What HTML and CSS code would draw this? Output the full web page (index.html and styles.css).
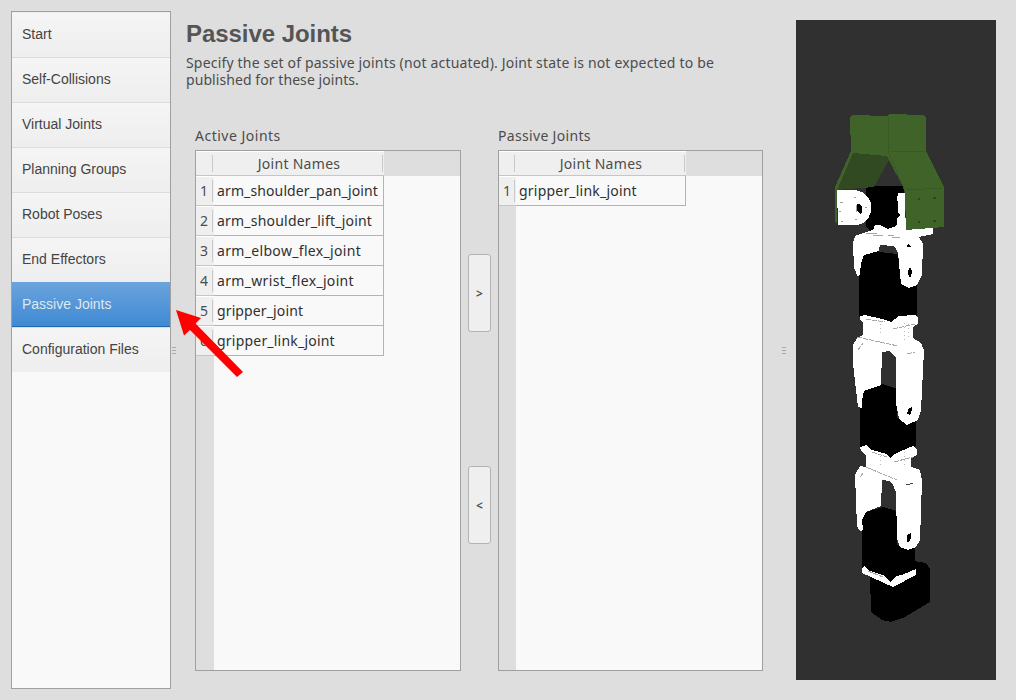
FILE: index.html
```html
<!DOCTYPE html>
<html lang="en">
<head>
<meta charset="utf-8">
<title>Passive Joints</title>
<link rel="stylesheet" href="styles.css">
</head>
<body>
<div class="app">
  <nav class="sidebar">
    <div class="item"><span>Start</span></div>
    <div class="item"><span>Self-Collisions</span></div>
    <div class="item"><span>Virtual Joints</span></div>
    <div class="item"><span>Planning Groups</span></div>
    <div class="item"><span>Robot Poses</span></div>
    <div class="item"><span>End Effectors</span></div>
    <div class="item selected"><span>Passive Joints</span></div>
    <div class="item"><span>Configuration Files</span></div>
  </nav>
  <div class="grip"><i></i><i></i><i></i></div>
  <main class="content">
    <h1>Passive Joints</h1>
    <p class="intro"><span class="intro-first">Specify the set of passive joints (not actuated). Joint state is not expected to be</span><br><span class="intro-second">published for these joints.</span></p>
    <div class="lists">
      <section class="list">
        <h2 class="wide">Active Joints</h2>
        <div class="table active">
          <div class="thead"><div class="corner"></div><div class="colhead"><span>Joint Names</span></div></div>
          <div class="row"><div class="num">1</div><div class="cell"><span class="snug">arm_shoulder_pan_joint</span></div></div>
          <div class="row"><div class="num">2</div><div class="cell"><span>arm_shoulder_lift_joint</span></div></div>
          <div class="row"><div class="num">3</div><div class="cell"><span class="loose">arm_elbow_flex_joint</span></div></div>
          <div class="row"><div class="num">4</div><div class="cell"><span class="loose">arm_wrist_flex_joint</span></div></div>
          <div class="row"><div class="num">5</div><div class="cell"><span class="snug">gripper_joint</span></div></div>
          <div class="row"><div class="num">6</div><div class="cell"><span>gripper_link_joint</span></div></div>
          <div class="gutter"></div>
        </div>
      </section>
      <div class="buttons"><button>&gt;</button><button>&lt;</button></div>
      <section class="list second">
        <h2>Passive Joints</h2>
        <div class="table passive">
          <div class="thead"><div class="corner"></div><div class="colhead"><span>Joint Names</span></div></div>
          <div class="row"><div class="num">1</div><div class="cell"><span>gripper_link_joint</span></div></div>
          <div class="gutter"></div>
        </div>
      </section>
    </div>
  </main>
  <div class="grip right"><i></i><i></i><i></i></div>
  <svg class="scene" viewBox="796 20 200 660" width="200" height="660" shape-rendering="crispEdges">
    <rect x="796" y="20" width="200" height="660" fill="#303030"/>
    <!-- base -->
    <path fill="#000" d="M870 575L914 561L926 563L930 569V602L905 617L891 622L882 620L871 612Z"/>
    <!-- servo bodies -->
    <path fill="#000" d="M862 520L866 512L883 507L897 511V545H915V572L892 581L862 572Z"/>
    <path fill="#000" d="M860 400L865 390L882 384L897 389L897 418H916V446L905 453L890 458L860 447Z"/>
    <path fill="#000" d="M859 270L863 255L878 251L898 254L901 283H917V316L905 318L890 322L859 317Z"/>
    <path fill="#000" d="M866 188L872 186H904V238H876L866 226Z"/>
    <!-- lower bracket -->
    <path fill="#fff" d="M860 447L866 445L872 450L887 454L890 458L895 454L901 451L913 446L917 449V455L911 458V467L920 470L922 480L920 540L916 547L908 550L900 547L897 538L896 492L893 485L890 481L882 480L881 506L866 512L862 520L863 530L860 531L857 526L855 475L860 466L866 467V455L861 451Z"/>
    <path fill="#fff" d="M862 568L864 566L868 570L885 576L890 582L896 576L902 575L911 571L916 569V575L893 587L862 573Z"/>
    <path fill="none" stroke="#a7aaa5" stroke-dasharray="5 1" d="M866 467L897 480M894 462L913 457M872 452L887 457M868 571L883 577M860 477L864 472"/>
    <path fill="none" stroke="#444" d="M906 484L908 484M907 485L913 483"/>
    <path fill="#000" d="M908 534L911 533V538L909 542H907V536Z"/>
    <!-- middle bracket -->
    <path fill="#fff" d="M860 316L865 315L882 319L891 322L899 316L915 315L918 318V324L913 327V338L921 343L924 350L921 410L918 420L907 425L899 419L896 403L896 358L890 351L882 352L881 385L864 391L862 400V408L858 407L853 364V345L857 338L863 335V323L860 320Z"/>
    <path fill="none" stroke="#a7aaa5" stroke-dasharray="5 1" d="M857 337L898 346M893 329L915 324M907 354L915 352M866 319L885 322M858 350L863 343"/>
    <path fill="none" stroke="#bbb" stroke-dasharray="1 3" d="M904 323V340M880 324V336M908 324V340M904 452V468M880 456V468"/>
    <path fill="#000" d="M909 408L912 407V410L910 415L907 414Z"/>
    <!-- upper bracket -->
    <path fill="#fff" d="M855 236L866 232L873 230L875 225L880 225L888 229L896 226L902 217L933 227V234L919 237L923 244L922 275L917 285L909 288L901 284L898 253L894 246L880 245L879 251L864 255L861 263L860 274L858 277L854 268L853 243Z"/>
    <path fill="#303030" d="M879 247L896 248L898 254L879 252Z"/>
    <path fill="none" stroke="#a3a9a0" d="M866 233.500H877M873 235.500H883M888 235.500H894M892 237.500H900"/>
    <path fill="#000" d="M909 268H911L912 271L911 277H909L908 273ZM908 243L911 247H907Z"/>
    <!-- gripper motor mounts -->
    <path fill="#fff" d="M837 190L855 190L862 192L868 197L871 203V212L868 219L863 223L858 225H838Z"/>
    <path fill="#000" d="M857 204H860L862 207V212L860 214L857 211Z"/>
    <path fill="none" stroke="#9ca39a" d="M856.500 205V212M840 202.500H843M839 211.500H841M841 221.500H843M854 197.500H856M855 219.500H857M865 207.500H867"/>
    <path fill="#fff" d="M898 193H905V230H897V218L900 215L898 212V202L897 199Z"/>
    <!-- gripper fingers -->
    <path fill="#314a21" d="M853 153H888L890 158L874 187L835 190Z"/>
    <path fill="#406329" d="M850 117L853 115L887 116L890 114L924 115L926 118V151L944 187V227L906 230L905 191L887 156L853 153L837 190V223L835 222V187L851 151Z"/>
    <path fill="none" stroke="#395a24" d="M888 117V151L905 191M906 190L942 188M889 151L925 152"/>
    <path fill="#2c461d" d="M918 198H920V200H918ZM933 197H936V199H933ZM918 221H920V223H918ZM933 220H936V222H933Z"/>
  </svg>
</div>
<svg class="arrow" viewBox="0 0 70 70" width="70" height="70"><path fill="red" d="M1 0L26 8L20.500 13.500L68 62L62 67L15 20L9 25.500Z"/></svg>
</body>
</html>
```
FILE: styles.css
```css
* { box-sizing: border-box; }
body {
  margin: 0; width: 1016px; height: 700px; overflow: hidden;
  background: #dedede; color: #4c4c4c;
  font: 14px/17px "Noto Sans", sans-serif;
}
.app { display: flex; height: 700px; }
.sidebar {
  width: 160px; height: 678px; margin: 11px 0 0 11px; flex: none;
  border: 1px solid #a0a0a0; background: #f9f9f9;
  font: 14px/16px "Liberation Sans", Arial, sans-serif; color: #444;
}
.item {
  height: 45px; padding: 13px 0 0 10px; border-top: 1px solid #dcdcdc;
  background: linear-gradient(#f5f5f5, #eee);
}
.item:first-child { border-top-color: #eee; }
.item.selected {
  padding-top: 14px; border-top: 0; border-bottom: 1px solid #2467a8;
  background: linear-gradient(#6ba3dc, #3f8ad4); color: #dfe7ef;
}
.grip {
  width: 4px; margin: 347px 10px 0 0; flex: none;
  display: flex; flex-direction: column; gap: 2px;
}
.sidebar + .grip { margin: 347px 10px 0 1px; }
.grip i { height: 1px; background: #aaa; }
.content { width: 577px; flex: none; margin-right: 19px; }
h1 { margin: 20px 0 0; font: bold 24px/28px "Liberation Sans", Arial, sans-serif; color: #555; letter-spacing: -.05px; }
.intro { margin: 6px 0 0; white-space: nowrap; }
.intro-first { letter-spacing: .18px; }
.intro-second { letter-spacing: .07px; }
.lists { display: flex; margin: 39px 0 0 9px; }
.list h2 { margin: 0 0 6px; font-size: 14px; font-weight: 400; line-height: 17px; letter-spacing: .32px; }
.list .wide { letter-spacing: .5px; }
.table {
  height: 521px; border: 1px solid #a0a0a0; background: #f9f9f9;
  display: flex; flex-direction: column;
}
.active { width: 266px; --gutter: 18px; --col: 170px; }
.passive { width: 265px; --gutter: 17px; --col: 170px; }
.thead { display: flex; height: 25px; flex: none; background: #dedede; }
.corner, .colhead, .num {
  background: linear-gradient(#c9c9c9, #c9c9c9) right 1px center / 1px 17px no-repeat, #efefef;
}
.corner { width: var(--gutter); border-top: 1px solid #fff; border-bottom: 1px solid #c6c6c6; }
.colhead {
  width: var(--col); text-align: center; line-height: 23px; letter-spacing: .3px;
  border-top: 1px solid #fff; border-bottom: 1px solid #c6c6c6;
}
.row { display: flex; height: 30px; flex: none; line-height: 28px; }
.num {
  width: var(--gutter); padding-left: 4px; background-size: 1px 22px, auto;
  border-top: 1px solid #fff; border-bottom: 1px solid #c6c6c6;
}
.cell {
  width: var(--col); padding: 1px 0 0 3px; color: #303030; white-space: nowrap; letter-spacing: .21px;
  border-right: 1px solid #b4b4b4; border-bottom: 1px solid #b4b4b4;
}
.snug { letter-spacing: .12px; }
.loose { letter-spacing: .33px; }
.gutter { flex: 1; width: var(--gutter); background: #dedede; }
.buttons { width: 23px; margin: 127px 7px 0; display: flex; flex-direction: column; gap: 134px; }
button {
  height: 78px; padding: 2px 0 0; border: 1px solid #b3b3b3; border-radius: 3px;
  background: #efefef; color: #4c4c4c; font: 600 12px/14px "Noto Sans", sans-serif;
}
.scene { display: block; margin-top: 20px; flex: none; }
.arrow { position: absolute; left: 175px; top: 310px; }
```
